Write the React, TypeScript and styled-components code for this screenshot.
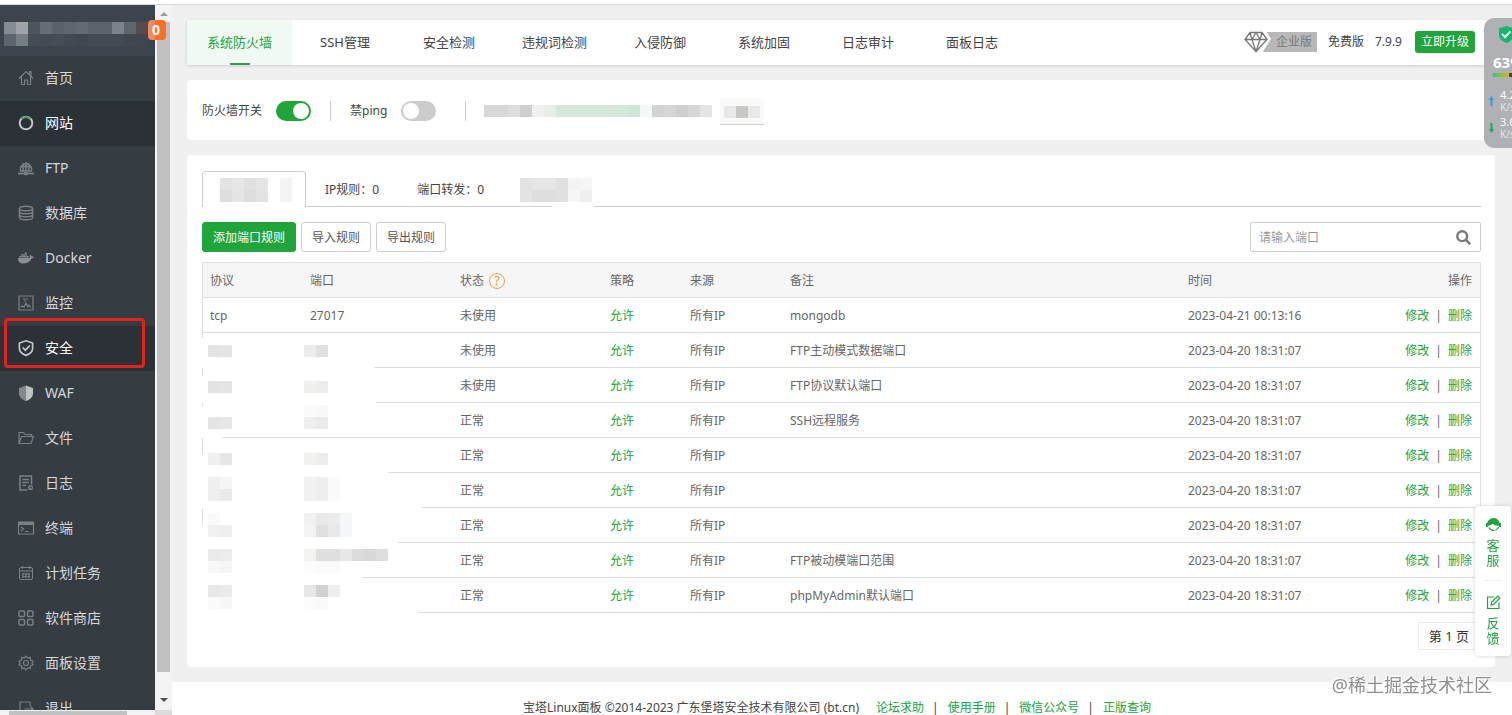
import React, { useState } from 'react';
import styled, { createGlobalStyle, css } from 'styled-components';
import { FaDocker } from 'react-icons/fa';

const green = '#20a53a';
const line = '#e0e0e0';

const GlobalStyle = createGlobalStyle`
  *, *::before, *::after { box-sizing: border-box; }
  body {
    margin: 0;
    background: #f0f0f0;
    color: #555;
    font: 12px/20px "Noto Sans", "Noto Sans CJK SC", sans-serif;
  }
  button, input { font: inherit; color: inherit; }
  button { cursor: pointer; }
  a { text-decoration: none; color: inherit; }
`;

const Page = styled.div`
  height: 100vh;
  display: flex;
  flex-direction: column;
  overflow: hidden;
`;

const TopStrip = styled.div`
  flex: none;
  height: 5px;
  background: #fff;
  border-bottom: 1px solid #d9d9d9;
`;

const Shell = styled.div`
  flex: 1;
  min-height: 0;
  display: flex;
`;

/* ---------- redacted blocks ---------- */

const MosaicGrid = styled.div<{ $top?: number }>`
  display: flex;
  flex-direction: column;
  padding-top: ${p => p.$top ?? 0}px;
`;

const MosaicLine = styled.div`
  display: flex;
`;

const Tile = styled.span<{ $c: string }>`
  flex: none;
  width: 12px;
  height: 12px;
  background: ${p => p.$c};
`;

function Mosaic({ rows, top }: { rows: string[]; top?: number }) {
  return (
    <MosaicGrid $top={top} aria-hidden>
      {rows.map((r, i) => (
        <MosaicLine key={i}>
          {r.split(' ').map((c, j) => (
            <Tile key={j} $c={c === '-' ? 'transparent' : `#${c}`} />
          ))}
        </MosaicLine>
      ))}
    </MosaicGrid>
  );
}

/* ---------- sidebar ---------- */

const SideArea = styled.aside`
  flex: none;
  width: 172px;
  display: flex;
  flex-direction: column;
`;

const SideTop = styled.div`
  flex: 1;
  min-height: 0;
  display: flex;
`;

const Sidebar = styled.nav`
  position: relative;
  width: 155px;
  background: #353c42;
`;

const SideClip = styled.div`
  height: 100%;
  overflow: hidden;
`;

const SideHead = styled.div`
  height: 51px;
  padding: 17px 0 0 4px;
  background: #3c444d;
`;

const Badge = styled.span`
  position: absolute;
  z-index: 2;
  top: 15px;
  right: -11px;
  width: 18px;
  height: 20px;
  padding-right: 2px;
  border-radius: 4px;
  background: linear-gradient(to right, #f08a5c 7px, #fc6d26 7px);
  color: #fff;
  font-size: 14px;
  font-weight: 700;
  text-align: center;
`;

const NavItem = styled.a<{ $active?: boolean; $marked?: boolean }>`
  position: relative;
  display: flex;
  align-items: center;
  gap: 11px;
  height: 45px;
  padding: 0 0 2px 18px;
  font-size: 14px;
  color: ${p => (p.$active ? '#fff' : '#d6d8da')};
  background: ${p => (p.$active ? '#2c3138' : 'transparent')};
  ${p =>
    p.$marked &&
    css`
      &::after {
        content: '';
        position: absolute;
        inset: -8px 10px 3px 4px;
        border: 3px solid #e3231b;
        border-radius: 4px;
      }
    `}
`;

const NavIcon = styled.svg<{ $bright?: boolean }>`
  flex: none;
  width: 16px;
  height: 16px;
  fill: none;
  stroke: ${p => (p.$bright ? '#c3c6c8' : '#7b8186')};
  stroke-width: 1.2;
  overflow: visible;
`;

const DockerIcon = styled(FaDocker)`
  flex: none;
  width: 16px;
  height: 16px;
  color: #8a8f93;
`;

const ScrollTrack = styled.div`
  width: 17px;
  display: flex;
  flex-direction: column;
  padding: 0 2px;
  background: #f3f3f3;
`;

const ScrollThumb = styled.div`
  flex: 1;
  background: #c1c1c1;
`;

const ScrollArrow = styled.div<{ $down?: boolean }>`
  height: ${p => (p.$down ? 38 : 17)}px;
  padding-top: ${p => (p.$down ? 26 : 7)}px;
  display: flex;
  justify-content: center;
  &::before {
    content: '';
    height: 4px;
    border: 4px solid transparent;
    ${p => (p.$down ? 'border-top-color: #4f4f4f; border-bottom: 0;' : 'border-bottom-color: #9b9b9b; border-top: 0;')}
  }
`;

const BottomScroll = styled.div`
  height: 5px;
  display: flex;
  padding: 1px 17px 0 9px;
  background: linear-gradient(to left, #dcdcdc 17px, #f3f3f3 17px);
  &::before {
    content: '';
    width: 118px;
    background: #c1c1c1;
  }
`;

const icons: Record<string, React.ReactNode> = {
  home: <path d="M1 8.500 8 1.500l7 7M3.500 7v7.500h3V10h3v4.500h3V7M11.500 4.500v-3h1.500V6" />,
  site: (
    <>
      <circle cx="8" cy="8" r="6.300" strokeWidth="2" />
      <path d="M3.500 4Q8 0 12.500 4" stroke="#5d9a68" strokeWidth="2" />
    </>
  ),
  ftp: (
    <>
      <path d="M2.500 11a5.700 5.700 0 1 1 11 0zM8 2v9M2.500 6.500h11M5.500 3Q4 7 5.500 11M10.500 3q1.500 4 0 8" strokeWidth="1.500" />
      <path d="M0 13.500h16" strokeWidth="1.800" />
      <circle cx="8" cy="13.500" r="1.500" fill="#7b8186" />
    </>
  ),
  db: (
    <g strokeWidth="1.500">
      <ellipse cx="8" cy="3.500" rx="6.500" ry="2.300" />
      <path d="M1.500 3.500v9c0 3 13 3 13 0v-9M1.500 6.500c0 3 13 3 13 0M1.500 9.500c0 3 13 3 13 0" />
    </g>
  ),
  monitor: <path d="M1 1h14v14H1zM5 4h5M6 6h2M2.500 12l2-1 1.500 1 2-4 2 4 1-2 2 2.500" />,
  safe: <path d="M8 .8 14.600 3v5.500c0 3-3 5.500-6.600 6.900-3.600-1.400-6.600-3.900-6.600-6.900V3zM4.800 7.500l2.500 2.700 4.500-4.600" strokeWidth="1.700" />,
  waf: (
    <>
      <path d="M8 .5 1 3v5.500C1 12 4 14.500 8 16z" fill="#85898c" stroke="none" />
      <path d="M8 .5 15 3v5.500c0 3.500-3 6-7 7.500z" fill="#bfc2c3" stroke="none" />
    </>
  ),
  folder: <path d="M1 13.500v-11h4.500L7 4.500h6.500v2M1 13.500l2.500-7h12L13 13.500z" />,
  log: (
    <>
      <path d="M9.500 15H2V1h11.500v8.500M4.500 4.500H11M4.500 7.500H11M4.500 10.500H8" strokeWidth="1.500" />
      <circle cx="12.500" cy="12.500" r="1.800" strokeWidth="1.500" />
    </>
  ),
  terminal: (
    <>
      <path d="M.5 2h15v12H.5zM3 7l2.500 2L3 11M7 11.500h3.500" />
      <path d="M.5 3.500h15" strokeWidth="3" />
    </>
  ),
  plan: <path d="M3 2.500h10q1.500 0 1.500 1.500v9q0 1.500-1.500 1.500H3q-1.500 0-1.500-1.500V4q0-1.500 1.500-1.500zM1.500 6h13M4.500 1v3M11.500 1v3M4 9h8M4 11.700h8M5 8v5M8 8v5M11 8v5" strokeWidth="1" />,
  store: (
    <g strokeWidth="1.500">
      <rect x="1" y="1" width="5.500" height="5.500" rx="1" />
      <rect x="9.500" y="1" width="5.500" height="5.500" rx="1" />
      <rect x="1" y="9.500" width="5.500" height="5.500" rx="1" />
      <rect x="9.500" y="9.500" width="5.500" height="5.500" rx="1" />
    </g>
  ),
  gear: (
    <>
      <path d="M8 1l1.600 2 2.600-.7.300 2.700L15 6.200 14 8l1 1.800-2.500 1.200-.3 2.700-2.600-.7L8 15l-1.600-2-2.600.7-.3-2.700L1 9.800 2 8 1 6.200 3.500 5l.3-2.700 2.600.7z" />
      <circle cx="8" cy="8" r="2.500" />
    </>
  ),
  exit: <path d="M12 6V2H2v12h10v-2M6.500 9H15M12.500 6.500 15 9l-2.500 2.500" />,
};

const navItems: { icon: string; label: string; active?: boolean; marked?: boolean }[] = [
  { icon: 'home', label: '首页' },
  { icon: 'site', label: '网站', active: true },
  { icon: 'ftp', label: 'FTP' },
  { icon: 'db', label: '数据库' },
  { icon: 'docker', label: 'Docker' },
  { icon: 'monitor', label: '监控' },
  { icon: 'safe', label: '安全', active: true, marked: true },
  { icon: 'waf', label: 'WAF' },
  { icon: 'folder', label: '文件' },
  { icon: 'log', label: '日志' },
  { icon: 'terminal', label: '终端' },
  { icon: 'plan', label: '计划任务' },
  { icon: 'store', label: '软件商店' },
  { icon: 'gear', label: '面板设置' },
  { icon: 'exit', label: '退出' },
];

/* ---------- main column ---------- */

const Main = styled.main`
  flex: 1;
  min-width: 0;
  display: flex;
  flex-direction: column;
  overflow-y: auto;
  scrollbar-width: none;
`;

const Content = styled.div`
  flex: none;
  display: flex;
  flex-direction: column;
  gap: 15px;
  padding: 15px 17px 15px 15px;
`;

const TabBar = styled.header`
  display: flex;
  align-items: center;
  height: 45px;
  padding-right: 20px;
  background: #fff;
  box-shadow: 0 1px 3px rgba(0, 0, 0, 0.14);
`;

const MainTab = styled.button<{ $active?: boolean }>`
  position: relative;
  height: 45px;
  min-width: 104px;
  padding: 0 21px 1px;
  border: 0;
  font-size: 13px;
  white-space: nowrap;
  color: ${p => (p.$active ? green : '#444')};
  background: ${p => (p.$active ? '#f0f9f2' : 'transparent')};
  ${p =>
    p.$active &&
    css`
      padding: 0 20px 1px;
      margin-right: 1px;
      &::after {
        content: '';
        position: absolute;
        left: 50%;
        bottom: 0;
        width: 20px;
        height: 2px;
        margin-left: -10px;
        background: #3d9a55;
      }
    `}
`;

const Edition = styled.div`
  margin-left: auto;
  display: flex;
  align-items: center;
  gap: 11px;
  padding-bottom: 2px;
  white-space: nowrap;
  color: #444;
`;

const ProBadge = styled.span`
  display: flex;
  align-items: center;
  color: #777;
`;

const ProLabel = styled.span`
  height: 20px;
  margin-left: -8px;
  padding: 0 5px 0 13px;
  background: #b8b8b8;
`;

const Diamond = styled.svg`
  position: relative;
  width: 27px;
  height: 22px;
  fill: none;
  stroke: #777;
  stroke-width: 1.3;
`;

const UpgradeButton = styled.button`
  height: 22px;
  margin-left: 2px;
  padding: 0 6px;
  border: 0;
  border-radius: 3px;
  background: ${green};
  color: #fff;
`;

const Card = styled.section`
  background: #fff;
  border-radius: 4px;
`;

const SwitchCard = styled(Card)`
  display: flex;
  align-items: center;
  height: 60px;
  padding: 2px 15px 0;
  color: #444;
`;

const SwitchLabel = styled.label`
  display: flex;
  align-items: center;
  gap: 14px;
`;

const Toggle = styled.input`
  appearance: none;
  width: 35px;
  height: 20px;
  margin: 0;
  padding: 2px;
  border-radius: 10px;
  background: #ccc;
  &::before {
    content: '';
    display: block;
    width: 16px;
    height: 16px;
    border-radius: 50%;
    background: #fff;
  }
  &:checked { background: ${green}; }
  &:checked::before { margin-left: 15px; }
`;

const Divider = styled.span<{ $after: number; $before: number }>`
  width: 1px;
  height: 20px;
  margin: 0 ${p => p.$after}px 0 ${p => p.$before}px;
  background: #d0d0d0;
`;

const RedactedLink = styled.span`
  display: flex;
  justify-content: center;
  width: 44px;
  height: 27px;
  margin-left: 8px;
  padding-top: 8px;
  border-bottom: 1px solid #ccc;
  background: #fafafa;
`;

const RulesCard = styled(Card)`
  padding: 16px 14px 17px 15px;
`;

const RuleTabs = styled.div`
  display: flex;
  height: 36px;
`;

const RuleTab = styled.button<{ $active?: boolean; $faded?: boolean }>`
  padding: 3px 19px 0;
  border: 0 solid #ccd0d6;
  border-bottom-width: 1px;
  background: #fff;
  color: #444;
  white-space: nowrap;
  ${p =>
    p.$active &&
    css`
      width: 104px;
      padding: 0 17px;
      border-width: 1px 1px 0;
      border-radius: 4px 4px 0 0;
    `}
  ${p =>
    p.$faded &&
    css`
      padding: 1px 2px 0 17px;
      border-bottom: 0;
      background: linear-gradient(#ccd0d6, #ccd0d6) left bottom / 49px 1px no-repeat;
    `}
`;

const RuleTabsRest = styled.div`
  flex: 1;
  border-bottom: 1px solid #ccd0d6;
`;

const Toolbar = styled.div`
  display: flex;
  align-items: center;
  gap: 5px;
  margin: 15px 0 10px;
`;

const ToolButton = styled.button<{ $primary?: boolean }>`
  height: 30px;
  padding: 1px 10px 0;
  border: 1px solid ${p => (p.$primary ? green : '#ccc')};
  border-radius: 3px;
  background: ${p => (p.$primary ? green : '#fff')};
  color: ${p => (p.$primary ? '#fff' : '#555')};
`;

const SearchBox = styled.label`
  display: flex;
  align-items: center;
  width: 231px;
  height: 30px;
  margin-left: auto;
  padding: 1px 9px 0 8px;
  border: 1px solid #ccc;
  border-radius: 2px;
`;

const SearchInput = styled.input`
  flex: 1;
  min-width: 0;
  padding: 0;
  border: 0;
  outline: 0;
  background: transparent;
  &::placeholder { color: #999; opacity: 1; }
`;

const SearchIcon = styled.svg`
  width: 15px;
  height: 15px;
  fill: none;
  stroke: #777;
  stroke-width: 2.4;
`;

const TableFrame = styled.div`
  border-top: 1px solid ${line};
  border-right: 1px solid ${line};
`;

const Table = styled.table`
  width: 100%;
  table-layout: fixed;
  border-collapse: collapse;
  color: #666;
`;

const Col = styled.col<{ $w?: number }>`
  width: ${p => (p.$w ? `${p.$w}px` : 'auto')};
`;

const HeadRow = styled.tr`
  height: 35px;
  background: #f6f6f6;
  box-shadow: inset 1px -1px 0 ${line};
`;

const Row = styled.tr<{ $from: number; $edge: number }>`
  height: 35px;
  background:
    linear-gradient(to right, transparent ${p => p.$from}px, ${line} ${p => p.$from}px) left bottom / 100% 1px no-repeat,
    linear-gradient(${line}, ${line}) left top / 1px ${p => p.$edge}px no-repeat;
`;

const Th = styled.th<{ $right?: boolean }>`
  padding: 0 8px;
  font-weight: 400;
  text-align: ${p => (p.$right ? 'right' : 'left')};
`;

const Td = styled.td<{ $right?: boolean }>`
  padding: 0 8px;
  white-space: nowrap;
  text-align: ${p => (p.$right ? 'right' : 'left')};
`;

const HiddenTd = styled.td<{ $left: number }>`
  padding: 0 0 0 ${p => p.$left}px;
  vertical-align: top;
`;

const HeadWithHelp = styled.span`
  display: flex;
  align-items: center;
  gap: 5px;
`;

const Help = styled.button`
  width: 16px;
  height: 16px;
  padding: 0;
  border: 1px solid #f0a04b;
  border-radius: 50%;
  background: transparent;
  color: #ef8f2f;
  line-height: 14px;
`;

const GreenLink = styled.a`
  color: ${green};
`;

const Bar = styled.span`
  margin: 0 6px;
`;

const Pager = styled.div`
  display: flex;
  justify-content: flex-end;
  margin-top: 9px;
`;

const PageInfo = styled.span`
  height: 28px;
  padding: 0 11px 0 10px;
  border: 1px solid #ececec;
  color: #333;
  font-size: 13px;
  line-height: 26px;
`;

const Footer = styled.footer`
  flex: 1 0 auto;
  display: flex;
  justify-content: center;
  padding: 16px 10px 0 0;
  background: #fff;
  color: #444;
`;

const FooterLinks = styled.span`
  margin-left: 17px;
`;

const FooterBar = styled.span`
  margin: 0 9px 0 8px;
`;

/* ---------- floating widgets ---------- */

const ServicePanel = styled.div`
  position: fixed;
  right: 1px;
  bottom: 59px;
  width: 36px;
  padding: 11px 0 10px;
  display: flex;
  flex-direction: column;
  align-items: center;
  border-radius: 4px;
  background: #fff;
  box-shadow: 0 0 4px rgba(0, 0, 0, 0.18);
`;

const ServiceButton = styled.button`
  display: flex;
  flex-direction: column;
  align-items: center;
  gap: 6px;
  width: 18px;
  padding: 0;
  border: 0;
  background: transparent;
  color: ${green};
  font-size: 13px;
  line-height: 15px;
  & + & {
    margin-top: 12px;
    padding-top: 14px;
    border-top: 1px solid #eee;
  }
`;

const ServiceIcon = styled.svg`
  width: 15px;
  height: 15px;
  fill: none;
  stroke: ${green};
  stroke-width: 1.2;
`;

const Vertical = styled.span`
  width: 13px;
  word-break: break-all;
`;

const Monitor = styled.div`
  position: fixed;
  top: 18px;
  right: 0;
  width: 28px;
  height: 130px;
  padding: 8px 0 0 9px;
  overflow: hidden;
  border-radius: 10px 0 0 10px;
  background: #b0b1b4;
  color: #fff;
`;

const MonitorShield = styled.svg`
  display: block;
  width: 15px;
  height: 17px;
  margin-left: 6px;
`;

const MonitorScore = styled.div`
  height: 30px;
  padding-top: 8px;
  font-size: 15px;
  font-weight: 700;
  line-height: 22px;
  white-space: nowrap;
`;

const MonitorBar = styled.div`
  height: 4px;
  background: linear-gradient(to right, #3dbf8b, #8ac53c 9px, #e0b020 16px, #444 16px);
`;

const Speed = styled.div`
  display: flex;
  gap: 6px;
  height: 27px;
  margin-left: -4px;
  font-size: 11px;
  line-height: 13px;
  white-space: nowrap;
`;

const SpeedList = styled.div`
  padding-top: 11px;
`;

const SpeedArrow = styled.svg`
  flex: none;
  width: 5px;
  height: 10px;
  margin-top: 19px;
`;

const SpeedUnit = styled.div`
  font-size: 10px;
  color: #e6e6e8;
`;

const Watermark = styled.div`
  position: fixed;
  right: 20px;
  bottom: 18px;
  color: #8f8f8f;
  font-size: 18px;
  line-height: 24px;
  text-shadow: 1px 1px 0 #fff, -1px -1px 0 #fff;
`;

/* ---------- data ---------- */

const mainTabs = ['系统防火墙', 'SSH管理', '安全检测', '违规词检测', '入侵防御', '系统加固', '日志审计', '面板日志'];

type Rule = {
  from: number;
  edge: number;
  protocol?: string;
  port?: string;
  top?: number;
  maskA?: string[];
  maskB?: string[];
  status: string;
  note: string;
  time: string;
};

const later = '2023-04-20 18:31:07';

const rules: Rule[] = [
  { from: 0, edge: 35, protocol: 'tcp', port: '27017', status: '未使用', note: 'mongodb', time: '2023-04-21 00:13:16' },
  { from: 172, edge: 5, top: 12, maskA: ['e3e3e3 e5e5e5'], maskB: ['ececec e1e1e1'], status: '未使用', note: 'FTP主动模式数据端口', time: later },
  { from: 174, edge: 8, top: 13, maskA: ['e3e3e3 e5e5e5'], maskB: ['f0f0ee ededed'], status: '未使用', note: 'FTP协议默认端口', time: later },
  { from: 20, edge: 4, top: 2, maskA: ['- -', 'e5e5e5 e7e7e7'], maskB: ['fafafa f8f8f8', 'efefef ebebeb'], status: '正常', note: 'SSH远程服务', time: later },
  { from: 186, edge: 17, top: 15, maskA: ['f0f0f0 e6e6e6'], maskB: ['f1f1ef ededed'], status: '正常', note: '', time: later },
  { from: 220, edge: 0, top: 4, maskA: ['f0f0f0 f5f5f5', 'efefef eaeaea'], maskB: ['f1f1f1 eeeeee fafafa', 'f1f1f1 eeeeee fafafa'], status: '正常', note: '', time: later },
  { from: 196, edge: 17, top: 5, maskA: ['fafafa -', 'f1f1f1 efefef'], maskB: ['f1f1f1 e9e9e9 ebebeb f5f8f8', 'f3f3f3 e0e0de e8e8e8 f5f8f8'], status: '正常', note: '', time: later },
  { from: 160, edge: 0, top: 6, maskA: ['ebebeb ededed', 'f8f8f8 f5f5f5'], maskB: ['f3f3f1 dfdfdf dfdfdf e7e7e7 dcdcdc d8d8d8 dedede', 'fcfcfc fafafa fafafa'], status: '正常', note: 'FTP被动模端口范围', time: later },
  { from: 216, edge: 0, top: 7, maskA: ['e8e8e8 eaeaea', 'fafafa f7f7f7'], maskB: ['e7e7e7 d2d2d2 eeeeee', 'fcfcfc fafafa'], status: '正常', note: 'phpMyAdmin默认端口', time: later },
];

const footerLinks = ['论坛求助', '使用手册', '微信公众号', '正版查询'];

export default function App() {
  const [firewall, setFirewall] = useState(true);
  const [noPing, setNoPing] = useState(false);
  const [query, setQuery] = useState('');

  return (
    <Page>
      <GlobalStyle />
      <TopStrip />
      <Shell>
        <SideArea>
          <SideTop>
            <Sidebar>
              <Badge>0</Badge>
              <SideClip>
                <SideHead>
                  <Mosaic
                    rows={[
                      '878c92 a0a4a9 4c545c 666d75 5b626a 5f666e 636a72 5c636b 5c636b 7c838a 5e656c 564c4e',
                      '5d646b 777d83 444c54 434b53 454d55 414951 3f474f 434b52 434b52 444c53 40474f 3f464d',
                    ]}
                  />
                </SideHead>
                {navItems.map(item => (
                  <NavItem key={item.label} href="#" $active={item.active} $marked={item.marked}>
                    {item.icon === 'docker' ? (
                      <DockerIcon />
                    ) : (
                      <NavIcon viewBox="0 0 16 16" $bright={item.active}>
                        {icons[item.icon]}
                      </NavIcon>
                    )}
                    {item.label}
                  </NavItem>
                ))}
              </SideClip>
            </Sidebar>
            <ScrollTrack>
              <ScrollArrow />
              <ScrollThumb />
              <ScrollArrow $down />
            </ScrollTrack>
          </SideTop>
          <BottomScroll />
        </SideArea>

        <Main>
          <Content>
            <TabBar>
              {mainTabs.map((t, i) => (
                <MainTab key={t} $active={i === 0}>
                  {t}
                </MainTab>
              ))}
              <Edition>
                <ProBadge>
                  <Diamond viewBox="0 0 27 22">
                    <path d="M18 0h4l5 8-9 14h-6z" fill="#fff" stroke="none" />
                    <path d="M6 1.500h12L23 8.500 12 20.500 1 8.500zM1 8.500h22M6 1.500l2 7 4 12 4-12 2-7M8 8.500l4-7 4 7" />
                  </Diamond>
                  <ProLabel>企业版</ProLabel>
                </ProBadge>
                <span>免费版</span>
                <span>7.9.9</span>
                <UpgradeButton>立即升级</UpgradeButton>
              </Edition>
            </TabBar>

            <SwitchCard>
              <SwitchLabel>
                防火墙开关
                <Toggle type="checkbox" checked={firewall} onChange={e => setFirewall(e.target.checked)} />
              </SwitchLabel>
              <Divider $before={19} $after={19} />
              <SwitchLabel>
                禁ping
                <Toggle type="checkbox" checked={noPing} onChange={e => setNoPing(e.target.checked)} />
              </SwitchLabel>
              <Divider $before={29} $after={18} />
              <Mosaic
                rows={[
                  'd8d8d8 d8d8d8 dedede cfcfcf f0f0f0 e6eee8 d6e8dc d6e8dc d6e8dc d6e8dc d6e8dc d3e9db cfe7d8 f4f9f5 d3d3d3 d6d6d6 cfcfcf d6d6d6 e4e4e6',
                ]}
              />
              <RedactedLink>
                <Mosaic rows={['e8e8e8 c9c8c5 e8e8e8']} />
              </RedactedLink>
            </SwitchCard>

            <RulesCard>
              <RuleTabs>
                <RuleTab $active aria-label="端口规则">
                  <Mosaic rows={['e3e3e3 e6e6e6 e0e0e0 e5e5e5 - f3f3f3', 'dedede e5e5e5 dddddd e3e3e3 - f3f3f3']} />
                </RuleTab>
                <RuleTab>IP规则：0</RuleTab>
                <RuleTab>端口转发：0</RuleTab>
                <RuleTab $faded aria-label="地区规则">
                  <Mosaic rows={['e3e3e3 e6e6e6 e6e6e6 e0e0e0 f3f3f3 f5f5f5', 'e3e3e3 dedede dedede e0e0e0 f6f6f6 efefef']} />
                </RuleTab>
                <RuleTabsRest />
              </RuleTabs>

              <Toolbar>
                <ToolButton $primary>添加端口规则</ToolButton>
                <ToolButton>导入规则</ToolButton>
                <ToolButton>导出规则</ToolButton>
                <SearchBox>
                  <SearchInput
                    aria-label="请输入端口"
                    placeholder="请输入端口"
                    value={query}
                    onChange={e => setQuery(e.target.value)}
                  />
                  <SearchIcon viewBox="0 0 15 15">
                    <circle cx="6.200" cy="6.200" r="4.900" />
                    <path d="M9.800 9.800 14.200 14.200" />
                  </SearchIcon>
                </SearchBox>
              </Toolbar>

              <TableFrame>
                <Table>
                  <colgroup>
                    <Col $w={100} />
                    <Col $w={150} />
                    <Col $w={150} />
                    <Col $w={80} />
                    <Col $w={100} />
                    <Col />
                    <Col $w={180} />
                    <Col $w={120} />
                  </colgroup>
                  <thead>
                    <HeadRow>
                      <Th>协议</Th>
                      <Th>端口</Th>
                      <Th>
                        <HeadWithHelp>
                          状态<Help>?</Help>
                        </HeadWithHelp>
                      </Th>
                      <Th>策略</Th>
                      <Th>来源</Th>
                      <Th>备注</Th>
                      <Th>时间</Th>
                      <Th $right>操作</Th>
                    </HeadRow>
                  </thead>
                  <tbody>
                    {rules.map((r, i) => (
                      <Row key={i} $from={r.from} $edge={r.edge}>
                        {r.maskA ? (
                          <HiddenTd $left={6}>
                            <Mosaic rows={r.maskA} top={r.top} />
                          </HiddenTd>
                        ) : (
                          <Td>{r.protocol}</Td>
                        )}
                        {r.maskB ? (
                          <HiddenTd $left={2}>
                            <Mosaic rows={r.maskB} top={r.top} />
                          </HiddenTd>
                        ) : (
                          <Td>{r.port}</Td>
                        )}
                        <Td>{r.status}</Td>
                        <Td>
                          <GreenLink href="#">允许</GreenLink>
                        </Td>
                        <Td>所有IP</Td>
                        <Td>{r.note}</Td>
                        <Td>{r.time}</Td>
                        <Td $right>
                          <GreenLink href="#">修改</GreenLink>
                          <Bar>|</Bar>
                          <GreenLink href="#">删除</GreenLink>
                        </Td>
                      </Row>
                    ))}
                  </tbody>
                </Table>
              </TableFrame>

              <Pager>
                <PageInfo>第 1 页</PageInfo>
              </Pager>
            </RulesCard>
          </Content>

          <Footer>
            <span>宝塔Linux面板 ©2014-2023 广东堡塔安全技术有限公司 (bt.cn)</span>
            <FooterLinks>
              {footerLinks.map((l, i) => (
                <React.Fragment key={l}>
                  {i > 0 && <FooterBar>|</FooterBar>}
                  <GreenLink href="#">{l}</GreenLink>
                </React.Fragment>
              ))}
            </FooterLinks>
          </Footer>
        </Main>
      </Shell>

      <Watermark>@稀土掘金技术社区</Watermark>

      <ServicePanel>
        <ServiceButton>
          <ServiceIcon viewBox="0 0 15 15">
            <path d="M1.500 8a6 6.500 0 0 1 12 0Q9 8.500 6.500 6 5 8.500 1.500 8z" fill={green} />
            <path d="M1 6v4M14 6v4" strokeWidth="2" />
            <path d="M3 10.500Q5 14 8.500 13.500M12.500 10q-1 2.500-3 3" />
          </ServiceIcon>
          <Vertical>客服</Vertical>
        </ServiceButton>
        <ServiceButton>
          <ServiceIcon viewBox="0 0 15 15">
            <path d="M8.500 2H1.500v11.500h11.500V7.500M5 10l.6-2.600L11.800 1.200l2 2L7.600 9.400z" />
          </ServiceIcon>
          <Vertical>反馈</Vertical>
        </ServiceButton>
      </ServicePanel>

      <Monitor>
        <MonitorShield viewBox="0 0 15 17">
          <path d="M7.500 0 15 2.500v6c0 4-3.500 7-7.500 8.500C3.500 15.500 0 12.500 0 8.500v-6z" fill="#12b76a" />
          <path d="M3 8l3 3 5.500-5.500" fill="none" stroke="#fff" strokeWidth="2" />
        </MonitorShield>
        <MonitorScore>63%</MonitorScore>
        <MonitorBar />
        <Speed>
          <SpeedArrow viewBox="0 0 5 10">
            <path d="M2.500 0 5 4H3.500v6h-2V4H0z" fill="#2f9bf0" />
          </SpeedArrow>
          <SpeedList>
            <div>4.2</div>
            <SpeedUnit>K/s</SpeedUnit>
          </SpeedList>
        </Speed>
        <Speed>
          <SpeedArrow viewBox="0 0 5 10">
            <path d="M2.500 10 5 6H3.500V0h-2v6H0z" fill="#17a56b" />
          </SpeedArrow>
          <SpeedList>
            <div>3.6</div>
            <SpeedUnit>K/s</SpeedUnit>
          </SpeedList>
        </Speed>
      </Monitor>
    </Page>
  );
}
